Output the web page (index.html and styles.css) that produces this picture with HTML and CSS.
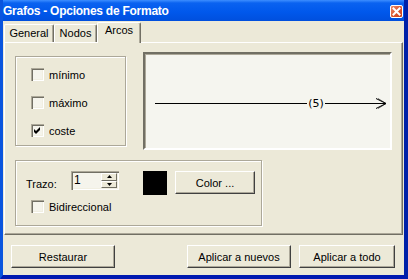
FILE: index.html
```html
<!DOCTYPE html>
<html>
<head>
<meta charset="utf-8">
<link rel="stylesheet" href="styles.css">
</head>
<body>
<div class="window">
  <div class="titlebar">
    <span class="title">Grafos - Opciones de Formato</span>
    <span class="close"><svg width="9" height="9" viewBox="0 0 9 9"><path d="M1.5 1.5 L7.5 7.5 M7.5 1.5 L1.5 7.5" stroke="#fff" stroke-width="2" stroke-linecap="square"/></svg></span>
  </div>
  <div class="client">
    <div class="tabs">
      <div class="tab t-general">General</div>
      <div class="tab t-nodos">Nodos</div>
      <div class="tab t-arcos active">Arcos</div>
    </div>
    <div class="panel">
      <div class="row1">
        <div class="group g1">
          <div class="chk"><span class="box"></span><span>mínimo</span></div>
          <div class="chk"><span class="box"></span><span>máximo</span></div>
          <div class="chk"><span class="box"><svg width="13" height="13" viewBox="0 0 13 13"><polygon points="3,5 5,7 9,3 9,6 5,10 3,8" fill="#000"/></svg></span><span>coste</span></div>
        </div>
        <div class="preview">
          <svg width="245" height="94" viewBox="0 0 245 94">
            <line x1="10" y1="49.5" x2="162" y2="49.5" stroke="#000" stroke-width="1"/>
            <text x="171" y="53" text-anchor="middle" class="lbl">(5)</text>
            <line x1="180" y1="49.5" x2="241" y2="49.5" stroke="#000" stroke-width="1"/>
            <polyline points="231,44.5 241,49.5 231,54.5" fill="none" stroke="#000" stroke-width="1"/>
            <polyline points="233,44.5 241,49.5 233,54.5" fill="none" stroke="#000" stroke-width="0.6"/>
          </svg>
        </div>
      </div>
      <div class="group g2">
        <div class="row2">
          <span class="lab">Trazo:</span>
          <div class="spin">
            <span class="val">1</span>
            <div class="spinbtns">
              <span class="sbtn"><svg width="5" height="3" viewBox="0 0 5 3"><polygon points="2.5,0 5,3 0,3" fill="#000"/></svg></span>
              <span class="sbtn"><svg width="5" height="3" viewBox="0 0 5 3"><polygon points="0,0 5,0 2.5,3" fill="#000"/></svg></span>
            </div>
          </div>
          <span class="swatch"></span>
          <span class="btn btn-color">Color ...</span>
        </div>
        <div class="chk chk-bi"><span class="box"></span><span>Bidireccional</span></div>
      </div>
    </div>
    <div class="buttons">
      <span class="btn btn-rest">Restaurar</span>
      <span class="btn btn-nuevos">Aplicar a nuevos</span>
      <span class="btn btn-todo">Aplicar a todo</span>
    </div>
  </div>
</div>
</body>
</html>
```
FILE: styles.css
```css
html, body { margin: 0; padding: 0; }
body {
  width: 408px; height: 279px; overflow: hidden;
  font-family: "Liberation Sans", Arial, sans-serif;
  font-size: 11px; color: #000;
  background: #fff;
}
.window {
  width: 408px; height: 279px; box-sizing: border-box;
  display: flex; flex-direction: column;
  background: #0A58E6;
  border-left: 3px solid #0A55DE;
  border-right: 4px solid #0020A8;
  border-bottom: 4px solid #0019B0;
}
.titlebar {
  height: 21px; flex: none;
  display: flex; align-items: center;
  background: linear-gradient(#3D8EFF 0, #0A62F0 3px, #0058EC 12px, #004FDD 21px);
}
.title {
  flex: 1;
  color: #fff; font-weight: bold; font-size: 12px;
  letter-spacing: -0.25px;
  line-height: 14px; padding-top: 1px;
}
.close {
  width: 13px; height: 13px; box-sizing: border-box;
  margin-right: 1px; margin-top: 1px;
  border: 1px solid #fff; border-radius: 2px;
  background: linear-gradient(135deg, #EC8A6A, #D9532C 60%, #C8401C);
  display: flex; align-items: center; justify-content: center;
}
.close svg { display: block; }
.client {
  flex: 1; background: #ECE9D8;
  display: flex; flex-direction: column;
}
.tabs {
  height: 21px; flex: none;
  display: flex; align-items: flex-end;
  padding-left: 1px;
}
.tab {
  box-sizing: border-box; height: 18px;
  border-top: 1px solid #fff; border-left: 1px solid #fff;
  border-right: 1px solid #716F64;
  box-shadow: inset -1px 0 0 #ACA899;
  border-radius: 2px 2px 0 0;
  text-align: center; line-height: 13px; padding-top: 2px;
}
.t-general { width: 50px; }
.t-nodos { width: 43px; }
.t-arcos { width: 44px; }
.tab.active {
  height: 21px; margin-bottom: -1px;
  position: relative; z-index: 1;
  background: #ECE9D8;
  padding-top: 1px;
}
.panel {
  height: 193px; box-sizing: border-box; flex: none;
  margin: 0 1px;
  border-top: 1px solid #fff; border-left: 1px solid #fff;
  border-right: 1px solid #716F64; border-bottom: 1px solid #716F64;
  box-shadow: inset -1px -1px 0 #ACA899;
  padding: 9px 10px;
}
.row1 { display: flex; align-items: flex-start; }
.group {
  box-sizing: border-box;
  border: 1px solid #ACA899;
  box-shadow: inset 1px 1px 0 #fff, 1px 1px 0 #fff;
}
.g1 {
  width: 111px; height: 90px; margin-top: 4px;
  padding: 11px 0 0 15px;
  display: flex; flex-direction: column; gap: 15px;
}
.chk { display: flex; align-items: center; height: 13px; gap: 5px; }
.box {
  width: 13px; height: 13px; box-sizing: border-box; flex: none;
  background: #F5F4EC;
  box-shadow: inset 1px 1px 0 #ACA899, inset 2px 2px 0 #716F64, inset -1px -1px 0 #fff, inset -2px -2px 0 #F1EFE2;
}
.box svg { display: block; }
.preview {
  width: 249px; height: 98px; box-sizing: border-box;
  margin-left: 17px;
  background: #F5F5EF;
  border-top: 2px solid #716F64; border-left: 2px solid #716F64;
  border-right: 2px solid #fff; border-bottom: 2px solid #fff;
  box-shadow: inset 1px 1px 0 #ACA899;
}
.preview svg { display: block; }
.lbl { font-family: "DejaVu Sans", sans-serif; font-size: 11px; fill: #000; }
.g2 {
  width: 247px; height: 66px; margin-top: 10px;
  padding: 10px 0 0 10px;
}
.row2 { display: flex; align-items: flex-start; height: 24px; }
.lab { width: 45px; margin-top: 7px; line-height: 13px; }
.spin {
  width: 48px; height: 19px; box-sizing: border-box;
  background: #F5F4EC;
  box-shadow: inset 1px 1px 0 #ACA899, inset 2px 2px 0 #716F64, inset -1px -1px 0 #fff, inset -2px -2px 0 #F1EFE2;
  display: flex; padding: 2px;
}
.val { flex: 1; padding-left: 1px; line-height: 15px; font-size: 12px; }
.spinbtns { width: 16px; display: flex; flex-direction: column; }
.sbtn {
  flex: 1; box-sizing: border-box;
  background: #ECE9D8;
  border-top: 1px solid #fff; border-left: 1px solid #fff;
  border-right: 1px solid #716F64; border-bottom: 1px solid #716F64;
  display: flex; align-items: center; justify-content: center;
}
.sbtn svg { display: block; }
.swatch { width: 24px; height: 24px; background: #000; margin-left: 24px; }
.btn {
  box-sizing: border-box; height: 23px;
  display: flex; align-items: center; justify-content: center;
  background: #ECE9D8;
  border-top: 1px solid #fff; border-left: 1px solid #fff;
  border-right: 1px solid #404040; border-bottom: 1px solid #404040;
  box-shadow: inset -1px -1px 0 #ACA899;
}
.btn-color { width: 80px; margin-left: 8px; }
.chk-bi { margin-top: 5px; margin-left: 5px; }
.buttons {
  display: flex; padding: 10px 9px 0 8px;
}
.btn-rest { width: 104px; }
.btn-nuevos { width: 104px; margin-left: auto; }
.btn-todo { width: 96px; margin-left: 8px; }
```
